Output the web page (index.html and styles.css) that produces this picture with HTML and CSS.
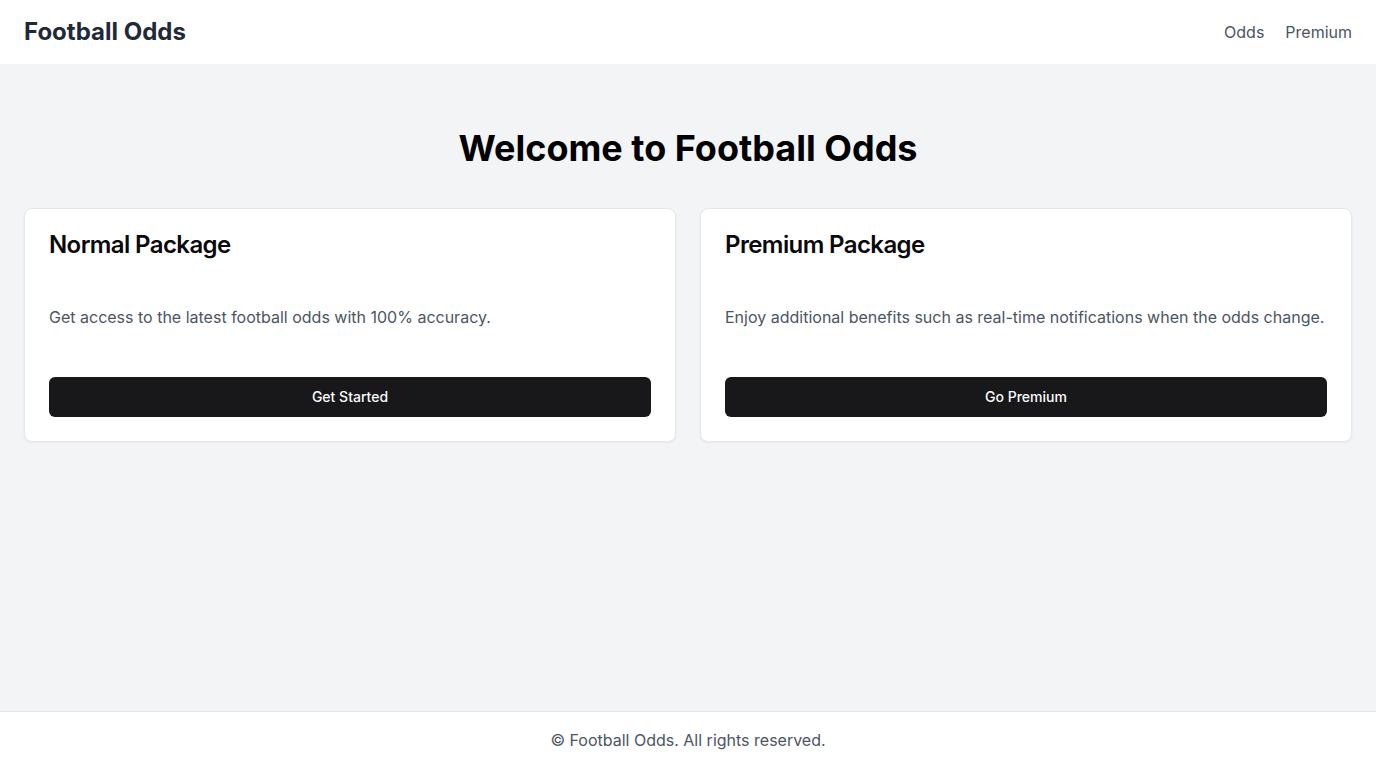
FILE: index.html
```html
<!DOCTYPE html>
<html lang="en">
<head>
<meta charset="utf-8">
<title>Football Odds</title>
<link rel="stylesheet" href="styles.css">
</head>
<body>
<div class="page">
  <header class="header">
    <div class="logo">Football Odds</div>
    <nav class="nav">
      <a href="#">Odds</a>
      <a href="#">Premium</a>
    </nav>
  </header>
  <main class="main">
    <h1 class="hero-title">Welcome to Football Odds</h1>
    <div class="cards">
      <div class="card">
        <div class="card-header"><h2 class="card-title">Normal Package</h2></div>
        <div class="card-content"><p>Get access to the latest football odds with 100% accuracy.</p></div>
        <div class="card-footer"><button class="btn">Get Started</button></div>
      </div>
      <div class="card">
        <div class="card-header"><h2 class="card-title">Premium Package</h2></div>
        <div class="card-content"><p>Enjoy additional benefits such as real-time notifications when the odds change.</p></div>
        <div class="card-footer"><button class="btn">Go Premium</button></div>
      </div>
    </div>
  </main>
  <footer class="footer">© Football Odds. All rights reserved.</footer>
</div>
</body>
</html>
```

FILE: styles.css
```css
* { box-sizing: border-box; }
html, body { margin: 0; padding: 0; }
body {
  font-family: Inter, "Noto Sans", sans-serif;
  color: #09090b;
  background: #f3f4f6;
}
.page {
  min-height: 100vh;
  display: flex;
  flex-direction: column;
}
.header {
  height: 64px;
  background: #fff;
  display: flex;
  align-items: center;
  justify-content: space-between;
  padding: 0 24px;
}
.logo {
  font-size: 24px;
  font-weight: 700;
  color: #1f2937;
  line-height: 32px;
}
.nav {
  display: flex;
  gap: 21px;
}
.nav a {
  color: #4b5563;
  text-decoration: none;
  font-size: 16px;
  line-height: 24px;
}
.main {
  flex: 1;
  padding: 64px 24px 24px;
}
.hero-title {
  margin: 0 0 40px;
  text-align: center;
  font-size: 36px;
  line-height: 40px;
  font-weight: 700;
  color: #000;
}
.cards {
  display: grid;
  grid-template-columns: 1fr 1fr;
  gap: 24px;
}
.card {
  background: #fff;
  border: 1px solid #e5e7eb;
  border-radius: 8px;
  box-shadow: 0 1px 2px rgba(0,0,0,0.05);
}
.card-header {
  padding: 24px 24px 48px;
}
.card-title {
  margin: 0;
  font-size: 24px;
  line-height: 24px;
  font-weight: 600;
  letter-spacing: -0.6px;
  color: #09090b;
}
.card-content {
  padding: 0 24px 24px;
}
.card-content p {
  margin: 0;
  font-size: 16px;
  line-height: 24px;
  color: #4b5563;
}
.card-footer {
  padding: 24px 24px 24px;
}
.btn {
  display: block;
  width: 100%;
  height: 40px;
  padding: 0 0 2px;
  border: 0;
  border-radius: 6px;
  background: #18181b;
  color: #fafafa;
  font-family: inherit;
  font-size: 14px;
  font-weight: 500;
  cursor: pointer;
}
.footer {
  background: #fff;
  border-top: 1px solid #e5e7eb;
  padding: 16px;
  text-align: center;
  font-size: 16px;
  line-height: 24px;
  color: #4b5563;
}
```
